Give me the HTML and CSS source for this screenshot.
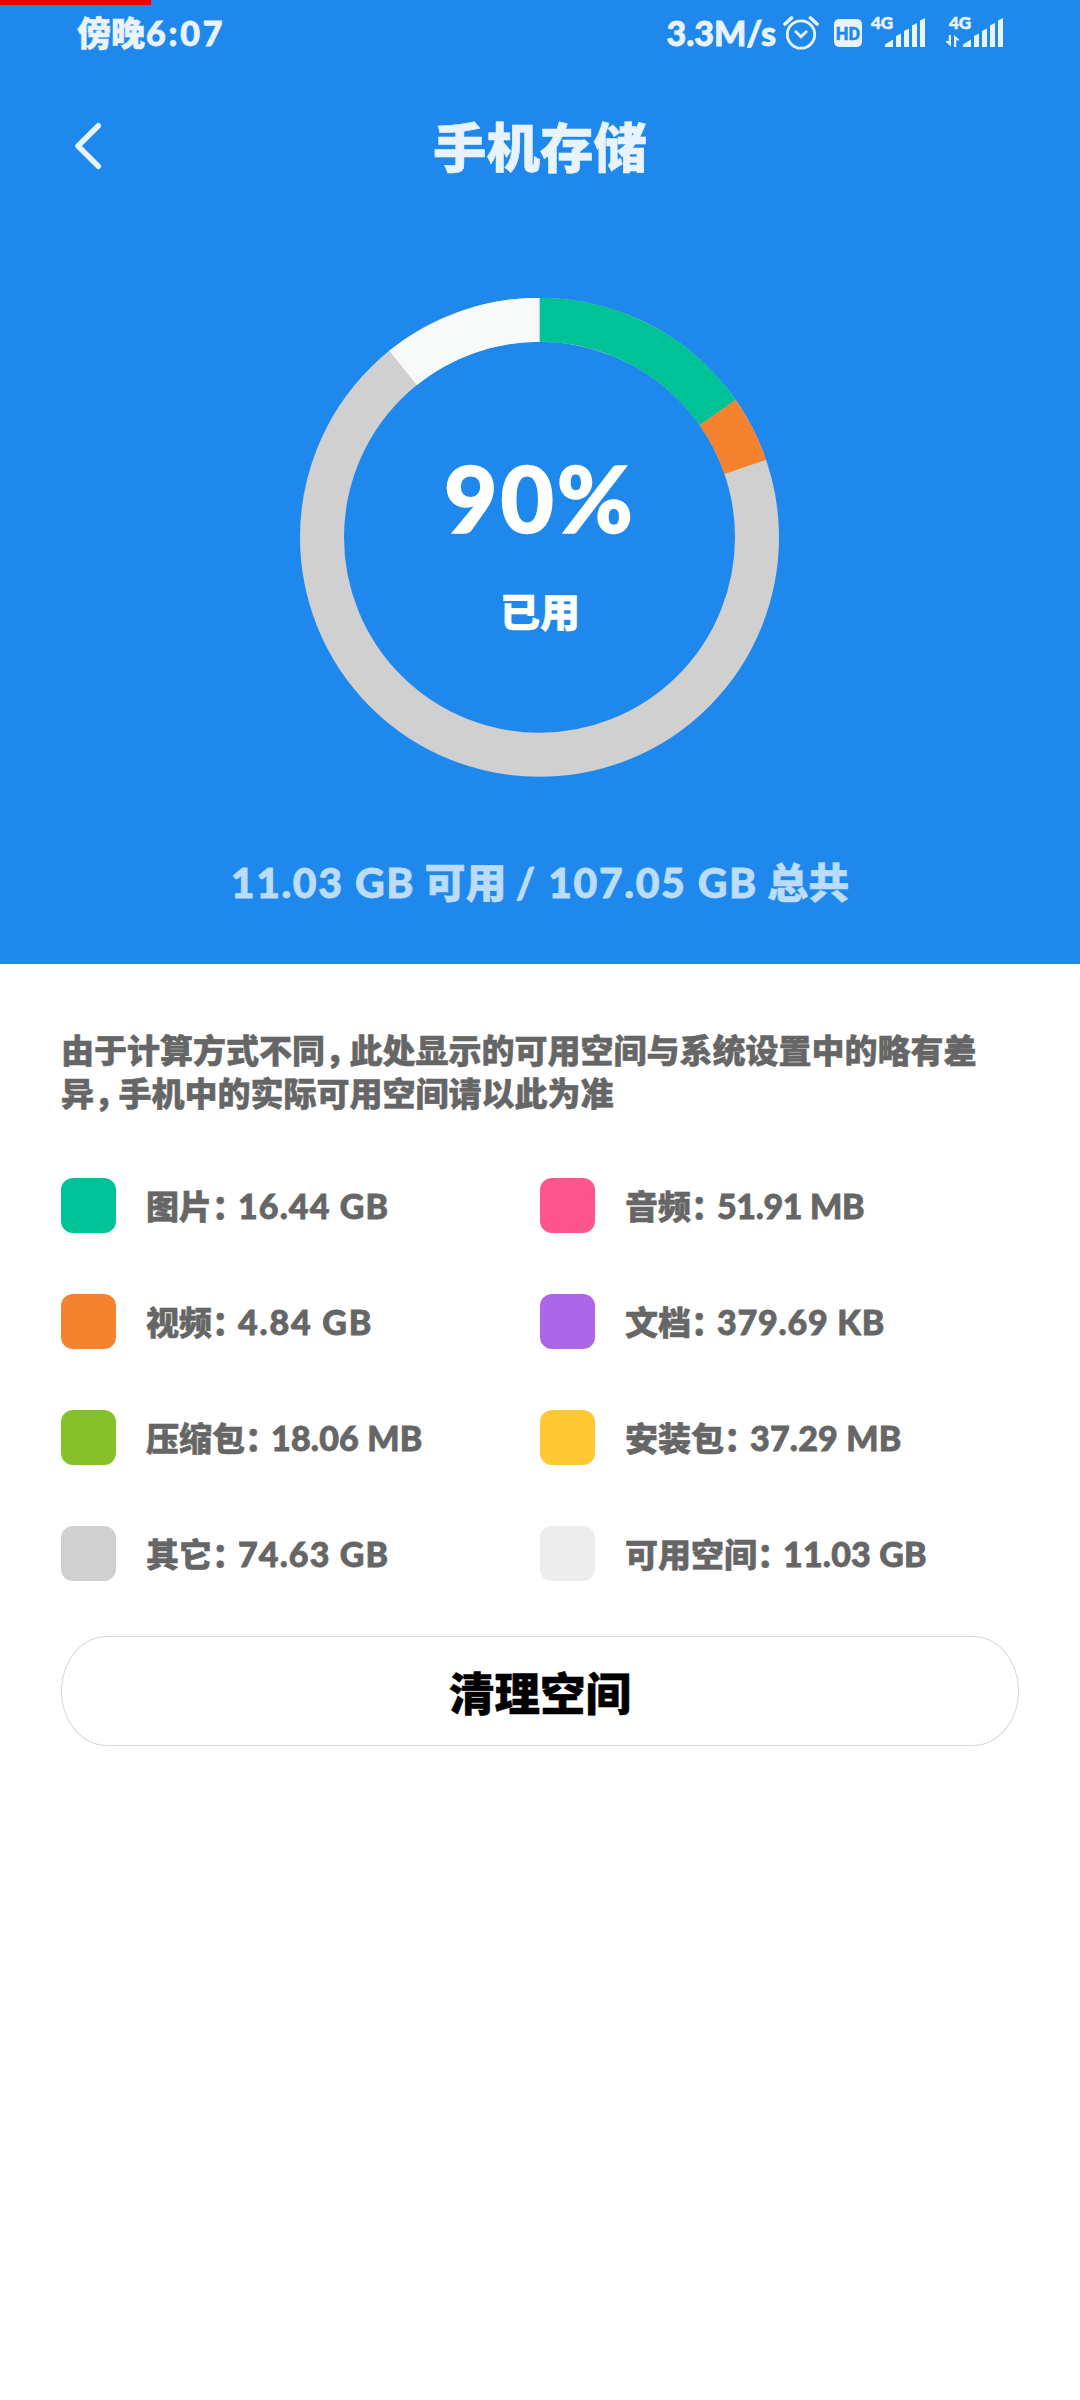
FILE: index.html
```html
<!DOCTYPE html>
<html lang="zh-CN">
<head>
<meta charset="utf-8">
<title>手机存储</title>
<link rel="stylesheet" href="styles.css">
</head>
<body>
<main class="screen">
  <section class="hero">
    <div class="load-bar"></div>
    <div class="status-bar">
      <div class="clock">傍晚<span class="num">6:07</span></div>
      <div class="status-right">
        <span class="num speed">3.3M/s</span>
        <svg class="alarm" width="36" height="36" viewBox="0 0 36 36" fill="none" stroke="currentColor" stroke-linecap="round">
          <circle cx="18" cy="19.500" r="13.700" stroke-width="2.800"/>
          <path d="M12.800 16.800 18 21.800l5.200-5" stroke-width="2.800"/>
          <path d="M2 9 8.500 3M27.500 3 34 9" stroke-width="3.600"/>
        </svg>
        <span class="hd">HD</span>
        <span class="signal">
          <span class="net">4G</span>
          <svg width="40" height="29" viewBox="0 0 40 29" fill="currentColor"><path d="M0 29V26.500L8 21.500V29ZM11 29V18L16 15.500V29ZM19 29V13L24 10.500V29ZM27 29V7.500L32 5V29ZM35 29V2.500L40 0V29Z"/></svg>
        </span>
        <span class="signal second">
          <span class="net">4G</span>
          <svg width="57" height="29" viewBox="0 0 57 29" fill="currentColor">
            <path d="M17 29V26.500L25 21.500V29ZM28 29V18L33 15.500V29ZM36 29V13L41 10.500V29ZM44 29V7.500L49 5V29ZM52 29V2.500L57 0V29Z"/>
            <path d="M2.800 17H5V28.500L0 24V23H2.800ZM8 29V17L13 21.500V22.500H10.200V29Z"/>
          </svg>
        </span>
      </div>
    </div>
    <header class="title-bar">
      <svg class="back" width="28" height="48" viewBox="0 0 28 48" fill="none" stroke="currentColor" stroke-width="5.500" stroke-linecap="round" stroke-linejoin="round"><path d="M24.300 3.700 4 24 24.300 44.300"/></svg>
      <h1>手机存储</h1>
    </header>
    <div class="chart">
      <svg class="ring" width="480" height="480" viewBox="-239.500 -239.300 480 480" fill="none" stroke-width="44">
        <g transform="rotate(-90)">
          <circle r="217.500" pathLength="107.050" stroke="#d0d0d0"/>
          <circle r="217.500" pathLength="107.050" stroke="#00c297" stroke-dasharray="16.350 107.050"/>
          <circle r="217.500" pathLength="107.050" stroke="#f5822f" stroke-dasharray="4.790 107.050" stroke-dashoffset="-16.350"/>
          <circle r="217.500" pathLength="107.050" stroke="#f8f9f9" stroke-dasharray="11.560 107.050" stroke-dashoffset="-95.490"/>
        </g>
      </svg>
      <div class="chart-label">
        <div class="percent num">90%</div>
        <div class="used">已用</div>
      </div>
    </div>
    <p class="capacity"><span class="num">11.03 GB</span> 可用 <span class="num">/ 107.05 GB</span> 总共</p>
  </section>
  <section class="detail">
    <p class="note">由于计算方式不同<span class="comma">，</span>此处显示的可用空间与系统设置中的略有差<br>异<span class="comma">，</span>手机中的实际可用空间请以此为准</p>
    <ul class="legend">
      <li><i class="swatch image"></i><span>图片<b>：</b><span class="num">16.44 GB</span></span></li>
      <li><i class="swatch audio"></i><span>音频<b>：</b><span class="num tighter">51.91 MB</span></span></li>
      <li><i class="swatch video"></i><span>视频<b>：</b><span class="num loose">4.84 GB</span></span></li>
      <li><i class="swatch doc"></i><span>文档<b>：</b><span class="num snug">379.69 KB</span></span></li>
      <li><i class="swatch zip"></i><span>压缩包<b>：</b><span class="num tight">18.06 MB</span></span></li>
      <li><i class="swatch apk"></i><span>安装包<b>：</b><span class="num tight">37.29 MB</span></span></li>
      <li><i class="swatch other"></i><span>其它<b>：</b><span class="num">74.63 GB</span></span></li>
      <li><i class="swatch free"></i><span>可用空间<b>：</b><span class="num tight">11.03 GB</span></span></li>
    </ul>
    <button class="clean">清理空间</button>
  </section>
</main>
</body>
</html>
```
FILE: styles.css
```css
* { box-sizing: border-box; margin: 0; padding: 0; }
body {
  width: 1080px;
  background: #fff;
  font-family: "Noto Sans CJK SC", sans-serif;
  font-weight: 900;
  -webkit-text-stroke: 0.5px currentColor;
}
.screen { height: 2400px; display: flex; flex-direction: column; background: #fff; }
.num { font-family: Lato, "Noto Sans CJK SC", sans-serif; font-weight: 900; letter-spacing: 0.04em; -webkit-text-stroke: 0.8px currentColor; }
.hero {
  height: 964px;
  background: #1f88ec;
  color: #e8f3fd;
  display: flex;
  flex-direction: column;
}
.load-bar { width: 151px; height: 5px; background: #e60000; }
.status-bar {
  height: 55px;
  padding: 0 77px 0 77px;
  display: flex;
  justify-content: space-between;
  align-items: center;
  font-size: 34px;
  line-height: 54px;
}
.clock .num { letter-spacing: 2.8px; margin-left: 1px; }
.status-right { display: flex; align-items: center; }
.speed { letter-spacing: 0; }
.alarm { margin-left: 7px; }
.hd {
  width: 28px; height: 28px;
  margin-left: 15px;
  border-radius: 5px;
  background: #e8f3fd;
  color: #1f88ec;
  font: 700 18px/29px Roboto, sans-serif;
  text-align: center;
}
.signal { position: relative; display: flex; margin-left: 23px; }
.signal.second { margin-left: 21px; }
.net {
  position: absolute;
  left: -14px; top: -5px;
  font: 900 17px/20px Lato, sans-serif;
}
.second .net { left: 3px; }
.title-bar { height: 169px; display: flex; align-items: center; }
.back { margin: 3px 0 0 74px; }
h1 { flex: 1; margin-right: 102px; text-align: center; font-size: 53.5px; font-weight: 900; line-height: 80px; }
.chart { display: grid; place-items: center; margin-top: 69px; height: 480px; }
.ring, .chart-label { grid-area: 1 / 1; }
.chart-label { color: #fff; text-align: center; padding-top: 6px; }
.percent { font-size: 92px; line-height: 110px; letter-spacing: 3px; -webkit-text-stroke-width: 1.5px; }
.used { font-size: 40px; line-height: 60px; margin-top: 27px; }
.capacity { margin-top: 72px; color: #bbdcfa; font-size: 41px; line-height: 60px; text-align: center; white-space: nowrap; }
.capacity .num { letter-spacing: 1.6px; }
.detail { padding: 64px 61px 0; color: #666; }
.note { font-size: 33px; line-height: 43px; white-space: nowrap; }
.comma { font-feature-settings: "halt"; letter-spacing: 8px; }
.legend {
  list-style: none;
  display: grid;
  grid-template-columns: 1fr 1fr;
  row-gap: 61px;
  margin-top: 64px;
}
.legend li { height: 55px; display: flex; align-items: center; gap: 30px; font-size: 33px; line-height: 55px; white-space: nowrap; }
.legend b { font-weight: 900; font-feature-settings: "halt"; letter-spacing: 9.5px; }
.legend .num { font-size: 34px; letter-spacing: 1.1px; }
.legend .snug { letter-spacing: 0.8px; }
.legend .tight { letter-spacing: 0.2px; }
.legend .tighter { letter-spacing: -0.35px; }
.legend .loose { letter-spacing: 1.8px; }
.swatch { width: 55px; height: 55px; border-radius: 12px; }
.image { background: #00c297; }
.audio { background: #ff558f; }
.video { background: #f5822f; }
.doc { background: #ac66e8; }
.zip { background: #86c12b; }
.apk { background: #fec935; }
.other { background: #d0d0d0; }
.free { background: #ededed; }
.clean {
  display: block;
  width: 958px; height: 110px;
  margin-top: 55px;
  border: 1px solid #d6d6d6;
  border-radius: 46px / 55px;
  background: #fff;
  color: #000;
  font: 900 45.5px/108px "Noto Sans CJK SC", sans-serif;
}
```
